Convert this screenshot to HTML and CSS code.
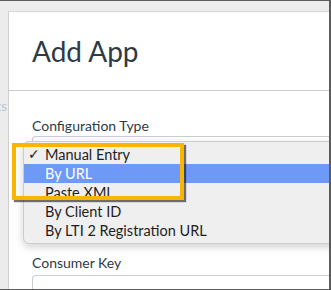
FILE: index.html
```html
<!DOCTYPE html>
<html lang="en">
<head>
  <meta charset="UTF-8">
  <title>Add App</title>
  <link rel="stylesheet" href="styles.css">
</head>
<body>
  <div class="frame">
    <div class="side">
      <span class="side-text">ts</span>
    </div>

    <div class="modal">
      <div class="modal-header">
        <h2>Add App</h2>
      </div>
      <div class="modal-body">
        <label class="field-label">Configuration Type</label>
        <div class="select-box"></div>
        <label class="field-label">Consumer Key</label>
        <div class="input-box"></div>
      </div>
    </div>

    <ul class="dropdown">
      <li class="option checked">Manual Entry</li>
      <li class="option active">By URL</li>
      <li class="option">Paste XML</li>
      <li class="option">By Client ID</li>
      <li class="option">By LTI 2 Registration URL</li>
    </ul>

    <div class="callout"></div>
  </div>
</body>
</html>
```

FILE: styles.css
```css
* {
  margin: 0;
  padding: 0;
  box-sizing: border-box;
}

body {
  font-family: 'Lato', 'Noto Sans', sans-serif;
  background: #ececec;
  overflow: hidden;
}

.frame {
  position: relative;
  display: flex;
  width: 331px;
  height: 290px;
  padding-top: 10px;
  background: #ececec;
  border-top: 1px solid #5c5c5c;
  border-right: 2px solid #5c5c5c;
  border-bottom: 1px solid #5c5c5c;
  overflow: hidden;
}

.side {
  width: 9px;
  border-right: 1px solid #cfcfcf;
  padding-top: 86px;
  overflow: hidden;
}

.side-text {
  display: block;
  margin-left: -4px;
  font-size: 14px;
  color: #b9c7d6;
}

.modal {
  flex-grow: 1;
  background: #fff;
  border-top: 1px solid #d6d6d6;
  color: #2d3b45;
}

.modal-header {
  height: 79px;
  padding: 21px 0 0 23px;
  border-bottom: 1px solid #c7cdd1;
}

.modal-header h2 {
  font-size: 28px;
  font-weight: 400;
  line-height: 36px;
}

.modal-body {
  padding: 25px 0 0 23px;
}

.field-label {
  display: block;
  font-size: 14px;
  line-height: 20px;
}

.select-box {
  height: 38px;
  margin-bottom: 79px;
  border: 1px solid #c7cdd1;
  border-right: none;
  border-radius: 4px 0 0 4px;
}

.input-box {
  height: 38px;
  margin-top: 2px;
  border: 1px solid #c7cdd1;
  border-right: none;
  border-radius: 4px 0 0 4px;
}

.dropdown {
  position: absolute;
  left: 23px;
  top: 140px;
  width: 320px;
  height: 103px;
  padding-top: 3px;
  list-style: none;
  background: #efefef;
  border: 1px solid #cdcdcd;
  border-radius: 6px;
  box-shadow: 0 3px 8px rgba(0, 0, 0, 0.18);
}

.option {
  position: relative;
  height: 19px;
  padding-left: 21px;
  font-size: 14.5px;
  line-height: 19px;
  color: #1e1e1e;
}

.option.checked::before {
  content: '\2713';
  position: absolute;
  left: 4px;
  top: 0;
  font-family: 'DejaVu Sans', sans-serif;
  font-size: 14px;
}

.option.active {
  background: #6f99f7;
  color: #fff;
}

.callout {
  position: absolute;
  left: 12px;
  top: 142px;
  width: 172px;
  height: 57px;
  border: 4px solid #f8b600;
  box-shadow: 2px 2px 1px rgba(0, 0, 0, 0.55);
}
```
